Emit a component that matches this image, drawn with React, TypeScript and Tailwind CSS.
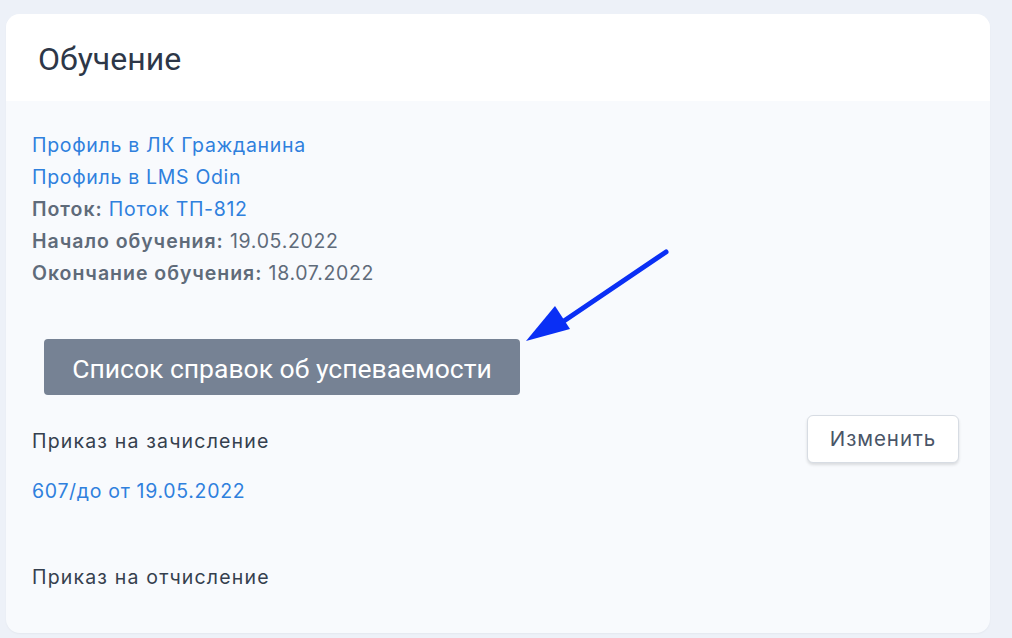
export default function App() {
  return (
    <div className="min-h-screen w-full bg-[#edf1f8] pl-[6px] pr-[22px] pt-[14px] font-['Inter',sans-serif]">
      <div className="h-[619px] overflow-hidden rounded-[14px] bg-[#f8fafd] shadow-[0_1px_2px_rgba(0,0,0,0.04)]">
        <div className="flex h-[87px] items-center bg-white pl-[32px] pt-[3px]">
          <h2 className="font-['Roboto',sans-serif] text-[32px] text-[#2d3748]">Обучение</h2>
        </div>
        <div className="relative px-[26px] pt-[28px] text-[19.5px] leading-[32px] tracking-[0.035em]">
          <a className="block text-[#2f80dd]">Профиль в ЛК Гражданина</a>
          <a className="block text-[#2f80dd]">Профиль в LMS Odin</a>
          <div className="text-[#5f6b7a]">
            <span className="font-semibold tracking-[0.05em]">Поток:</span> <a className="text-[#2f80dd]">Поток ТП-812</a>
          </div>
          <div className="text-[#5f6b7a]">
            <span className="font-semibold tracking-[0.05em]">Начало обучения:</span> 19.05.2022
          </div>
          <div className="text-[#5f6b7a]">
            <span className="font-semibold tracking-[0.05em]">Окончание обучения:</span> 18.07.2022
          </div>

          <button className="ml-[12px] mt-[50px] flex h-[56px] w-[476px] items-center justify-center rounded-[4px] bg-[#768294] pt-[3px] font-['Roboto',sans-serif] text-[26.5px] tracking-normal text-white">
            Список справок об успеваемости
          </button>

          <div className="mt-[20px] flex items-start justify-between pr-[5px]">
            <div className="pt-[10px] tracking-[0.06em] text-[#353f4e]">Приказ на зачисление</div>
            <button className="h-[48px] w-[152px] rounded-[6px] border border-[#d7dce3] bg-white text-[20.5px] tracking-[0.045em] text-[#4a5567] shadow-[0_2px_3px_rgba(0,0,0,0.12)]">
              Изменить
            </button>
          </div>
          <a className="mt-[12px] block text-[#2f80dd]">607/до от 19.05.2022</a>
          <div className="mt-[54px] tracking-[0.06em] text-[#353f4e]">Приказ на отчисление</div>

          <svg className="absolute left-[508px] top-[142px]" width="166" height="105" viewBox="0 0 166 105">
            <line x1="152" y1="9" x2="44" y2="82" stroke="#0a2ff5" strokeWidth="5" strokeLinecap="round" />
            <polygon points="12,98 41,63 56,86" fill="#0a2ff5" />
          </svg>
        </div>
      </div>
    </div>
  );
}
